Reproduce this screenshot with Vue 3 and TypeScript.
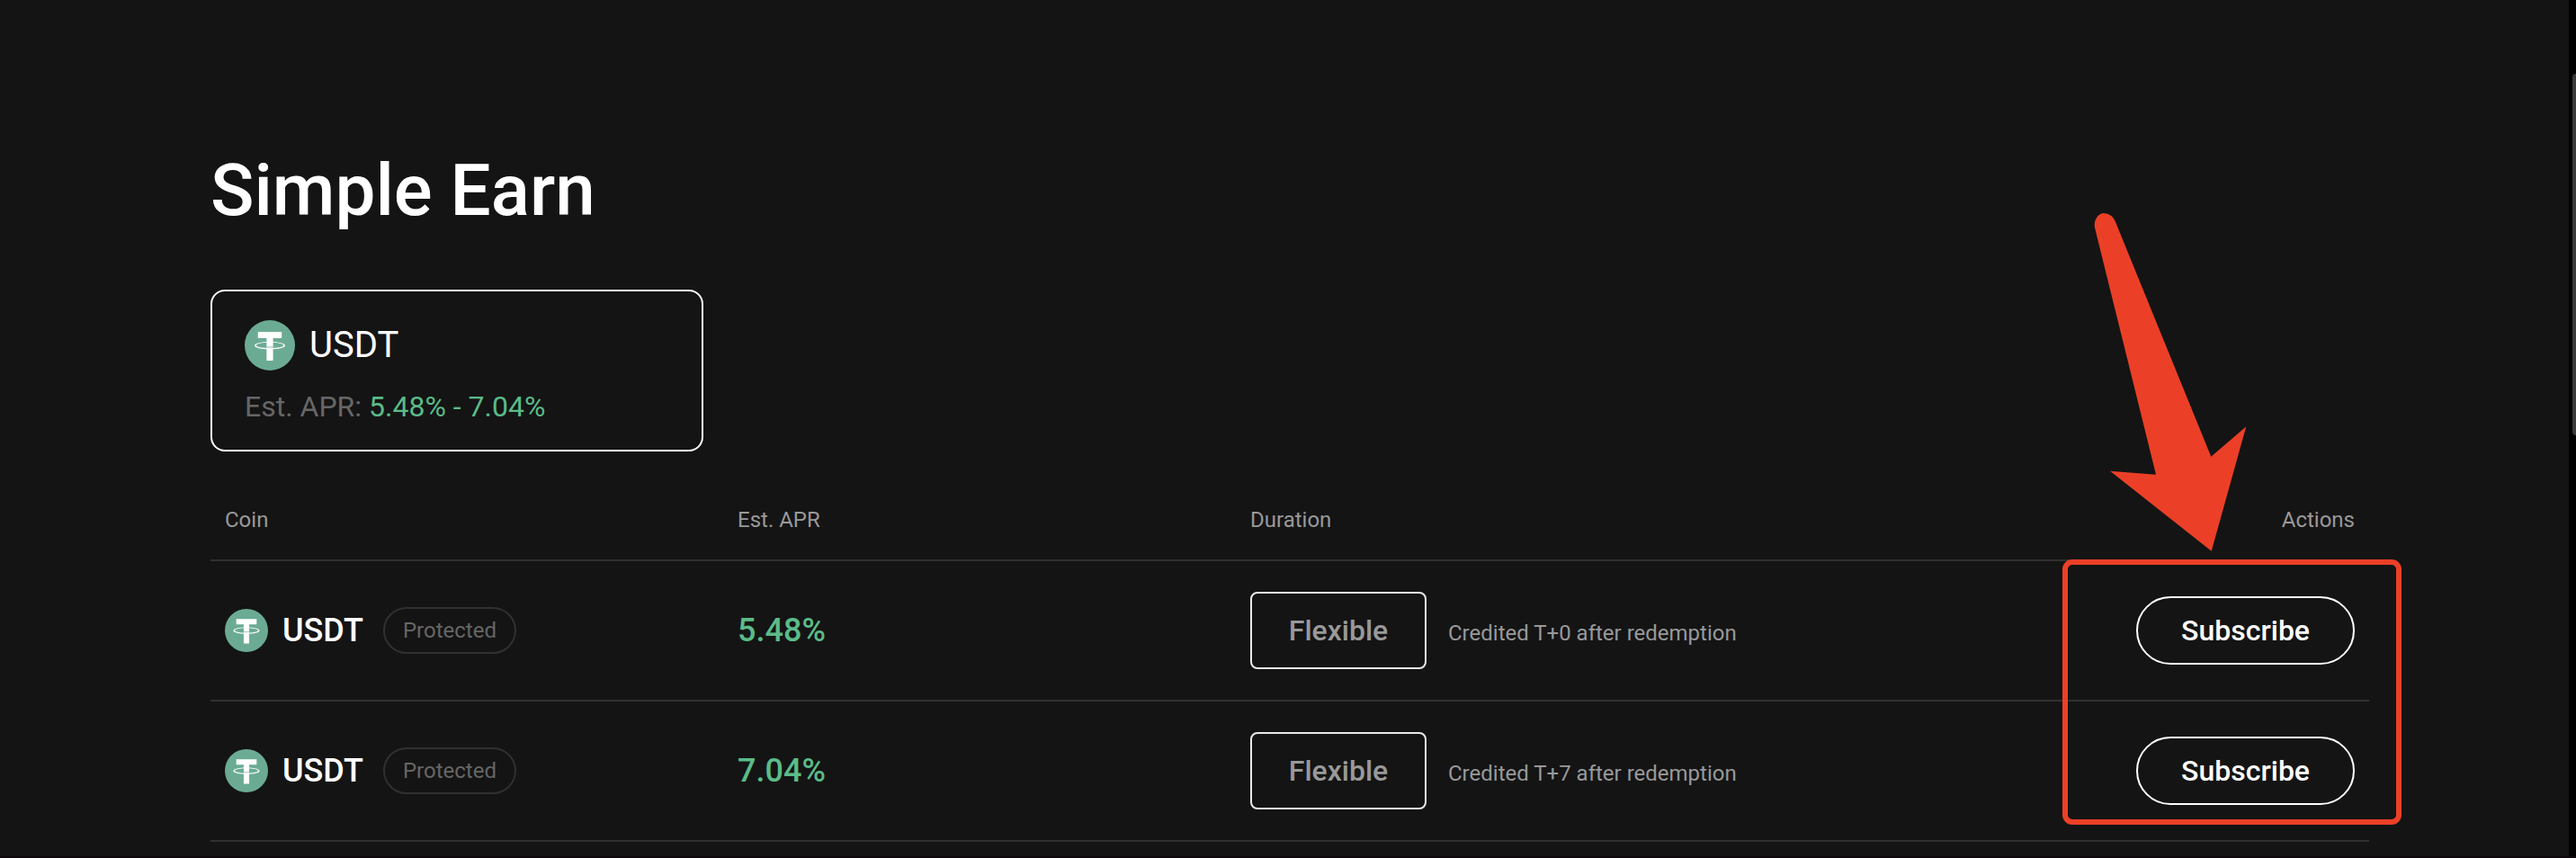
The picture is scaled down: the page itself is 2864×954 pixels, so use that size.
<script setup lang="ts">
import { defineComponent, h } from 'vue'

interface Product {
  id: number
  coin: string
  tag: string
  apr: string
  term: string
  note: string
}

const products: Product[] = [
  { id: 1, coin: 'USDT', tag: 'Protected', apr: '5.48%', term: 'Flexible', note: 'Credited T+0 after redemption' },
  { id: 2, coin: 'USDT', tag: 'Protected', apr: '7.04%', term: 'Flexible', note: 'Credited T+7 after redemption' },
]

const TetherIcon = defineComponent({
  name: 'TetherIcon',
  render() {
    return h('svg', { viewBox: '0 0 56 56', 'aria-hidden': 'true' }, [
      h('circle', { cx: 28, cy: 28, r: 28, fill: '#6bab94' }),
      h('path', { d: 'M14.8 13h26.4v7H31.6v25h-7.2V20h-9.6z', fill: '#fff' }),
      h('path', { d: 'M24.4 29.9q3.6.3 7.2 0', fill: 'none', stroke: '#8fc0ae', 'stroke-width': 1 }),
      h('path', {
        d: 'M11 28.2c0-2.3 7.6-4.2 17-4.2s17 1.9 17 4.2-7.6 4.2-17 4.2-17-1.9-17-4.2zm1.8-.2c0 1.7 6.8 3.1 15.2 3.1s15.2-1.4 15.2-3.1-6.8-3.2-15.2-3.2-15.2 1.5-15.2 3.2z',
        fill: '#fff',
        'fill-rule': 'evenodd',
      }),
    ])
  },
})
</script>

<template>
  <div class="page">
    <main class="content">
      <h1 class="title">Simple Earn</h1>

      <button type="button" class="coin-card">
        <span class="coin-card-head">
          <TetherIcon class="icon-large" />
          <span class="coin-card-name">USDT</span>
        </span>
        <span class="coin-card-apr">Est. APR: <span class="range">5.48% - 7.04%</span></span>
      </button>

      <div class="products">
        <table class="table">
          <thead>
            <tr>
              <th scope="col">Coin</th>
              <th scope="col">Est. APR</th>
              <th scope="col">Duration</th>
              <th scope="col" class="actions">Actions</th>
            </tr>
          </thead>
          <tbody>
            <tr v-for="p in products" :key="p.id">
              <td>
                <div class="coin">
                  <TetherIcon class="icon" />
                  <span class="coin-name">{{ p.coin }}</span>
                  <span class="tag">{{ p.tag }}</span>
                </div>
              </td>
              <td class="apr">{{ p.apr }}</td>
              <td>
                <div class="duration">
                  <button type="button" class="term">{{ p.term }}</button>
                  <span class="note">{{ p.note }}</span>
                </div>
              </td>
              <td class="actions">
                <button type="button" class="subscribe">Subscribe</button>
              </td>
            </tr>
          </tbody>
        </table>

        <svg class="arrow" viewBox="0 0 170 376" aria-hidden="true">
          <path
            d="M10.5 0C16.500 0 21.600 3.500 23.800 9.300L130.300 270.800L169.300 237.300L130.700 375.700L18 286.700L69 290.700L1.200 17C-.8 8.500 4 2 8.200.4Q9.300 0 10.500 0Z"
            fill="#eb4027"
          />
        </svg>
        <div class="highlight"></div>
      </div>
    </main>
    <div class="scroll-track">
      <div class="scroll-thumb"></div>
    </div>
  </div>
</template>

<style>
body {
  background: #141414;
}
</style>

<style scoped>
.page {
  box-sizing: border-box;
  display: flex;
  min-height: 100vh;
  background: #141414;
  border-bottom: 2px solid #0c070a;
  color: #fff;
  font-family: Roboto, 'Liberation Sans', sans-serif;
}

.content {
  flex: 1;
  min-width: 0;
  padding: 164px 222px 16px 234px;
}

button {
  background: transparent;
  color: inherit;
  font-family: inherit;
  cursor: pointer;
}

.title {
  margin: 0 0 62px;
  font-size: 80px;
  font-weight: 500;
  line-height: 96px;
}

.coin-card {
  box-sizing: border-box;
  display: flex;
  flex-direction: column;
  gap: 20px;
  width: 548px;
  max-width: 100%;
  padding: 32px 36px 28px;
  border: 2px solid #fff;
  border-radius: 16px;
  text-align: left;
}

.coin-card-head {
  display: flex;
  align-items: center;
  gap: 16px;
}

.icon-large {
  width: 56px;
  height: 56px;
}

.coin-card-name {
  font-size: 40px;
  line-height: 48px;
}

.coin-card-apr {
  color: #666;
  font-size: 32px;
  line-height: 40px;
}

.range {
  color: #5bbb89;
}

.products {
  position: relative;
  margin-top: 32px;
}

.table {
  width: 100%;
  border-spacing: 0;
  table-layout: fixed;
}

th,
td {
  box-sizing: border-box;
  padding: 0 16px;
  border-bottom: 2px solid #303030;
  text-align: left;
}

th {
  width: 23.75%;
  height: 90px;
  color: #999;
  font-size: 24px;
  font-weight: 400;
}

td {
  height: 156px;
}

th.actions {
  width: 28.75%;
}

th.actions,
.actions {
  text-align: right;
}

.coin {
  display: flex;
  align-items: center;
}

.icon {
  width: 48px;
  height: 48px;
  margin-right: 16px;
}

.coin-name {
  margin-right: 22px;
  font-size: 36px;
  font-weight: 500;
}

.tag {
  padding: 0 20px;
  border: 2px solid #303030;
  border-radius: 26px;
  color: #666;
  font-size: 24px;
  line-height: 48px;
}

.apr {
  color: #5bbb89;
  font-size: 36px;
  font-weight: 500;
}

.duration {
  display: flex;
  align-items: baseline;
  gap: 24px;
}

.term {
  flex: none;
  min-width: 196px;
  padding: 0 40px;
  border: 2px solid #e9e9ee;
  border-radius: 8px;
  color: #999;
  font-size: 32px;
  font-weight: 500;
  line-height: 82px;
}

.note {
  color: #999;
  font-size: 24px;
  white-space: nowrap;
}

.subscribe {
  padding: 0 48px;
  border: 2px solid #fff;
  border-radius: 38px;
  font-size: 32px;
  font-weight: 500;
  line-height: 72px;
  vertical-align: middle;
}

.highlight {
  position: absolute;
  top: 88px;
  right: -36px;
  box-sizing: border-box;
  width: 377px;
  height: 295px;
  border: 6px solid #eb4027;
  border-radius: 11px;
  pointer-events: none;
}

.arrow {
  position: absolute;
  top: -297px;
  right: 136px;
  width: 170px;
  height: 376px;
  pointer-events: none;
}

.scroll-track {
  flex: none;
  width: 4px;
  padding: 82px 0 0 4px;
  background: #000;
}

.scroll-thumb {
  height: 402px;
  border-radius: 4px 0 0 4px;
  background: #3a3a3a;
}
</style>
